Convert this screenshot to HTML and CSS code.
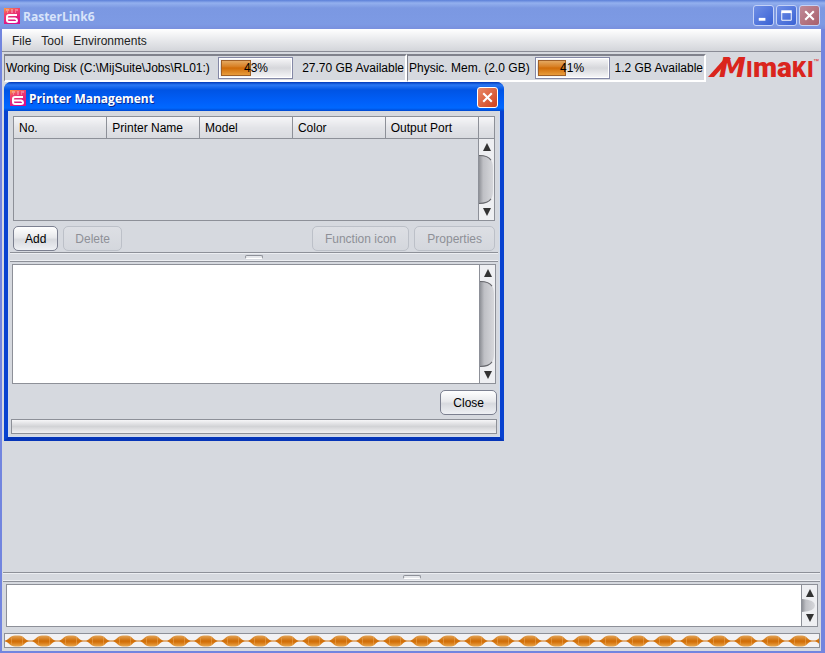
FILE: index.html
```
<!DOCTYPE html>
<html lang="en">
<head>
<meta charset="utf-8">
<title>RasterLink6</title>
<link rel="stylesheet" href="styles.css">
</head>
<body>
<svg width="0" height="0" class="defs" aria-hidden="true">
  <defs>
    <linearGradient id="pink" x1="0" y1="0" x2="0.4" y2="1"><stop offset="0" stop-color="#f9a040"/><stop offset="0.35" stop-color="#f0436a"/><stop offset="1" stop-color="#d8108c"/></linearGradient>
    <linearGradient id="thumb"><stop offset="0" stop-color="#8f9197"/><stop offset="0.3" stop-color="#bfc0c5"/><stop offset="1" stop-color="#d6d7db"/></linearGradient>
    <linearGradient id="orange" x1="0" y1="0" x2="0" y2="1"><stop offset="0" stop-color="#e2a458"/><stop offset="0.5" stop-color="#cf6c05"/><stop offset="0.65" stop-color="#d87812"/><stop offset="1" stop-color="#e8a850"/></linearGradient>
    <symbol id="app" viewBox="0 0 16 16">
      <rect width="16" height="16" fill="url(#pink)"/>
      <path d="M2 2h3M7 2h2M11 2h3M3 4h1M7 4h2M11 4h1" stroke="#fff" stroke-opacity=".6"/>
      <path d="M13 7H5Q3 7 3 9V12Q3 14 5 14H11Q13 14 13 12.500T11 10.500H4" fill="none" stroke="#fff" stroke-width="2"/>
    </symbol>
    <symbol id="cross" viewBox="0 0 20 20"><path d="M5.500 5.500l9 9m0-9l-9 9" stroke="#fff" stroke-width="2.200"/></symbol>
    <symbol id="up" viewBox="0 0 8 8"><path d="M4 0l4 8H0z" fill="#333"/></symbol>
    <symbol id="down" viewBox="0 0 8 8"><path d="M4 8L0 0h8z" fill="#333"/></symbol>
    <pattern id="wave" width="27" height="12" patternUnits="userSpaceOnUse">
      <path d="M0 5.500C3 5.500 5 .500 10 .500H14C19 .500 20 5.500 24 5.500H27V6.500H24C20 6.500 19 11.500 14 11.500H10C5 11.500 3 6.500 0 6.500z" fill="url(#orange)"/>
      <path d="M6.500 3v6M17.500 2v8" stroke="#eda95c" stroke-opacity=".5"/>
    </pattern>
  </defs>
</svg>
<div class="window">
  <header class="titlebar">
    <svg class="appicon"><use href="#app"/></svg>
    <h1>RasterLink6</h1>
    <button class="winbtn" aria-label="Minimize"><svg viewBox="0 0 20 20"><path d="M5 14h7" stroke="#fff" stroke-width="3"/></svg></button>
    <button class="winbtn" aria-label="Maximize"><svg viewBox="0 0 20 20"><path d="M5 6.500V15h10V6.500z" fill="none" stroke="#fff"/><path d="M4.500 6h11" stroke="#fff" stroke-width="3"/></svg></button>
    <button class="winbtn closedim" aria-label="Close window"><svg><use href="#cross"/></svg></button>
  </header>
  <div class="body">
    <nav class="menubar"><button>File</button><button>Tool</button><button>Environments</button></nav>
    <div class="status">
      <section class="gauge disk">
        <label for="disk">Working Disk (C:\MijSuite\Jobs\RL01:)</label>
        <span class="meter"><progress id="disk" max="100" value="43"></progress><span>43%</span></span>
        <span>27.70 GB Available</span>
      </section>
      <section class="gauge memory">
        <label for="mem">Physic. Mem. (2.0 GB)</label>
        <span class="meter"><progress id="mem" max="100" value="41"></progress><span>41%</span></span>
        <span>1.2 GB Available</span>
      </section>
      <svg class="logo" viewBox="0 0 112 40" role="img" aria-label="Mimaki">
        <path d="M0 29L17 10h6L6 29z" fill="#da251d"/>
        <g fill="#da251d">
          <text class="big" x="11" y="29">M</text>
          <text class="cap" x="38" y="29">I</text>
          <text class="low" x="45" y="29">m</text>
          <text class="low" x="69" y="29">a</text>
          <text class="cap" x="84" y="29">K</text>
          <text class="cap" x="99" y="29">I</text>
          <text class="tm" x="105" y="15">™</text>
        </g>
      </svg>
    </div>
    <main class="desktop">
      <div class="dialog" role="dialog" aria-labelledby="dlg">
        <header class="dlgtitle">
          <svg class="appicon"><use href="#app"/></svg>
          <h2 id="dlg">Printer Management</h2>
          <button class="winbtn closered" aria-label="Close dialog"><svg><use href="#cross"/></svg></button>
        </header>
        <div class="dlgbody">
          <div class="tablebox">
            <table>
              <thead><tr><th>No.</th><th>Printer Name</th><th>Model</th><th>Color</th><th>Output Port</th><th class="corner"></th></tr></thead>
            </table>
            <div class="tablearea">
              <div class="scroll"><svg class="arrow"><use href="#up"/></svg><svg class="thumb" viewBox="0 0 15 48" preserveAspectRatio="none"><path d="M0 0C10 0 14 4 14 13V35C14 44 10 48 0 48z" fill="url(#thumb)"/><path d="M0 .500C7 .500 10 2 12 5M12 43C10 46 7 47.500 0 47.500" fill="none" stroke="#66676c"/></svg><svg class="arrow"><use href="#down"/></svg></div>
            </div>
          </div>
          <div class="actions">
            <button class="btn">Add</button><button class="btn" disabled>Delete</button>
            <button class="btn push" disabled>Function icon</button><button class="btn" disabled>Properties</button>
          </div>
          <div class="splitter"><i></i></div>
          <div class="textbox info">
            <textarea aria-label="Printer details" readonly></textarea>
            <div class="scroll"><svg class="arrow"><use href="#up"/></svg><svg class="thumb" viewBox="0 0 15 84" preserveAspectRatio="none"><path d="M0 0C10 0 14 4 14 13V71C14 80 10 84 0 84z" fill="url(#thumb)"/><path d="M0 .500C7 .500 10 2 12 5M12 79C10 82 7 83.500 0 83.500" fill="none" stroke="#66676c"/></svg><svg class="arrow"><use href="#down"/></svg></div>
          </div>
          <div class="closing"><button class="btn">Close</button></div>
          <progress class="idle" max="100" value="0" aria-label="Printer progress"></progress>
        </div>
      </div>
    </main>
    <div class="splitter"><i></i></div>
    <div class="textbox log">
      <textarea aria-label="Log" readonly></textarea>
      <div class="scroll"><svg class="arrow"><use href="#up"/></svg><svg class="thumb" viewBox="0 0 15 15" preserveAspectRatio="none"><path d="M0 0Q13 1 13 7.500T0 15z" fill="url(#thumb)"/></svg><svg class="arrow"><use href="#down"/></svg></div>
    </div>
    <div class="activity" role="progressbar" aria-label="Activity"><svg><rect width="100%" height="12" fill="url(#wave)"/></svg></div>
  </div>
</div>
</body>
</html>
```
FILE: styles.css
```
* { box-sizing: border-box; }
body { margin: 0; font: 12px/16px "Liberation Sans", Arial, sans-serif; color: #000; }
button, textarea { font: inherit; }
svg { display: block; }
.defs { position: absolute; }
.window { min-height: 100vh; display: flex; flex-direction: column; background: #7285df; padding: 0 4px 2px 2px; }
.titlebar { height: 29px; display: flex; align-items: center; gap: 2px; margin: 0 -4px 0 -2px; padding: 2px 5px 0 4px;
  background: linear-gradient(#5b7fd8 0, #93b0ee 3px, #7b98e2 8px, #7d9ae4 24px, #7990de); }
.appicon { width: 16px; height: 16px; flex: none; }
h1, h2 { margin: 0; flex: 1; font: bold 12px/16px "Open Sans", "Noto Sans", sans-serif; padding-top: 2px; }
h1 { color: #d8e4fa; padding-left: 1px; }
h2 { color: #fff; text-shadow: 1px 1px 0 #0a2a90; }
.winbtn { width: 21px; height: 21px; padding: 0; border: 1px solid #c4d2f7; border-radius: 3px; background: linear-gradient(135deg, #6f8fe6, #3a62d4); }
.winbtn svg { width: 19px; height: 19px; }
.winbtn.closedim { background: linear-gradient(135deg, #c08a98, #a8606c); }
.winbtn.closered { border-color: #fff; background: linear-gradient(135deg, #e88a68, #d2401c); }
.body { flex: 1; display: flex; flex-direction: column; background: #d6d9df; }
.menubar { height: 23px; display: flex; gap: 10px; padding: 1px 10px 0; background: linear-gradient(#fff, #e8e9ec 50%, #d3d5da); border-bottom: 1px solid #8a8c96; }
.menubar button { border: 0; padding: 0; background: none; color: #222; }
.status { height: 29px; display: flex; align-items: center; padding: 2px 0 0 2px; }
.gauge { height: 28px; display: flex; align-items: center; justify-content: space-between; white-space: nowrap; border: 2px solid; border-color: #80828c #fff #fff #80828c; border-left-width: 1px; padding: 0 1px; }
.disk { flex: 0 1 403px; }
.memory { flex: 0 1 299px; }
.meter { display: grid; align-items: center; width: 75px; height: 22px; border: 1px solid #8488a6; padding: 1px; background: #fff; }
.meter > * { grid-area: 1 / 1; }
.meter span { text-align: center; }
.meter progress { appearance: none; width: 100%; height: 18px; border: 0; }
.meter progress::-webkit-progress-bar { background: linear-gradient(#f4f4f6, #d6d7db 50%, #f4f4f6); padding: 1px; }
.meter progress::-webkit-progress-value { background: linear-gradient(#e4a860, #d88024 40%, #d06c08 50%, #e89c3c); border: 1px solid #a06028; }
.logo { width: 112px; height: 40px; margin-left: 2px; flex: none; overflow: visible; }
.big { font: italic bold 27px "DejaVu Sans", sans-serif; }
.low { font: 900 28px Roboto, sans-serif; }
.cap { font: 900 22px Roboto, sans-serif; }
.tm { font: 6px "Liberation Sans", sans-serif; }
.desktop { position: relative; flex: 1; min-height: 360px; }
.dialog { position: absolute; left: 2px; top: 1px; width: 500px; border: 4px solid; border-top: 0; border-color: #0046d8 #0842d0 #0535b8; border-radius: 8px 8px 0 0; background: #d6d9df; box-shadow: inset 0 0 0 1px #cfdcf0; }
.dlgtitle { height: 29px; margin: 0 -4px; padding: 2px 6px 0; display: flex; align-items: center; gap: 3px; border-radius: 7px 7px 0 0; background: linear-gradient(#0038b8, #2a78f4 3px, #0054e4 8px, #0060fa 20px, #0068ff 26px, #0048d0); }
.dlgbody { padding: 5px 3px 3px; display: flex; flex-direction: column; }
.tablebox { margin: 0 2px; border: 1px solid #8d9098; }
table { width: 100%; border-collapse: collapse; table-layout: fixed; }
th { height: 21px; padding: 1px 5px 0; text-align: left; font-weight: normal; border-right: 1px solid #8d9098; border-bottom: 1px solid #8d9098; background: linear-gradient(#f6f6f8, #e3e4e8 50%, #d8dadf); }
th.corner { width: 16px; padding: 0; border-right: 0; }
.tablearea { height: 81px; display: flex; justify-content: flex-end; }
.scroll { width: 16px; display: flex; flex-direction: column; align-items: center; gap: 4px; padding: 4px 0; border-left: 1px solid #8d9098; background: #eeeff2; }
.arrow { width: 8px; height: 8px; flex: none; }
.thumb { width: 100%; flex: 1; min-height: 0; }
.actions { display: flex; gap: 5px; padding: 5px 2px 1px; }
.btn { height: 25px; padding: 1px 11px 0; border: 1px solid #7c8090; border-radius: 5px; background: linear-gradient(#fff, #e8e9ec 45%, #d8dadf 55%, #eef0f4); color: #000; }
.btn:disabled { border-color: #bcc0c8; background: linear-gradient(#dddfe4, #d4d7dd); color: #8e9097; }
.actions .push, .push ~ .btn, .closing .btn { padding: 1px 12px 0; }
.push { margin-left: auto; }
.splitter { height: 10px; margin: 0 -1px; border: solid #8d9098; border-width: 1px 0; display: grid; place-items: center; box-shadow: inset 0 1px #eceef2, inset 0 -1px #eceef2; }
.splitter i { width: 18px; height: 4px; border: 1px solid #8d9098; border-bottom-color: #fff; border-radius: 3px; background: #e6e8ec; }
.textbox { display: flex; border: 1px solid #8d9098; background: #fff; }
.textbox textarea { flex: 1; min-width: 0; border: 0; padding: 2px; resize: none; outline: 0; }
.info { height: 120px; margin: 2px 1px 6px; }
.closing { display: flex; justify-content: flex-end; margin-bottom: 4px; }
.idle { appearance: none; width: 100%; height: 15px; border: 1px solid #8d9098; }
.idle::-webkit-progress-bar { background: linear-gradient(#f6f6f8, #d2d3d6 50%, #f0f0f2); }
.log { height: 43px; margin: 2px 3px 6px 4px; }
.log .scroll { gap: 2px; }
.body > .splitter { margin: 0 1px; }
.activity { height: 15px; margin: 0 1px 3px 2px; border: 1px solid #8d9098; background: #f2f2f4; padding: 1px 0; overflow: hidden; }
.activity svg { width: 100%; height: 12px; }
```
